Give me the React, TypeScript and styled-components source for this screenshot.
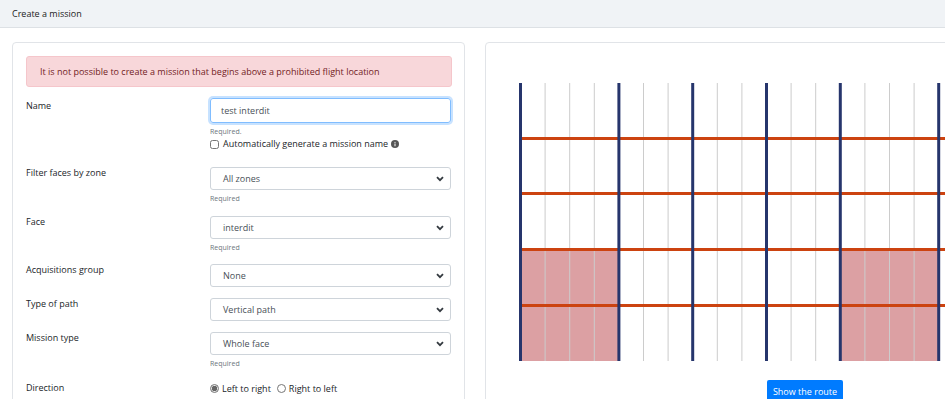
import styled, { createGlobalStyle } from "styled-components";

const GlobalStyle = createGlobalStyle`
	html, body {
		margin: 0;
		overflow: hidden;
		background: #ffffff;
	}
	body {
		font-family: "Open Sans", "Noto Sans", sans-serif;
		color: #212529;
	}
	* {
		box-sizing: border-box;
	}
`;

// grid columns: ~24.6px apart, thick where a face starts
const COL = 24.6;
const COLS = 23;
const THICK = [0, 4, 7, 10, 13, 17, 20, 23];
const ROW_Y = [0, 55.5, 110.5, 166.5, 222.5, 277];
const PINK = [
	[0, 4],
	[13, 17],
];

function FaceGrid() {
	const width = COL * COLS + 2;
	const height = ROW_Y[ROW_Y.length - 1] + 1;
	const cols = Array.from({ length: COLS + 1 }, (_, i) => i);

	return (
		<svg width={width} height={height} style={{ display: "block" }}>
			{PINK.map(([a, b]) => (
				<rect
					key={a}
					x={1 + a * COL}
					y={ROW_Y[3]}
					width={(b - a) * COL}
					height={height - ROW_Y[3]}
					fill="#dca0a3"
				/>
			))}
			{cols
				.filter((i) => !THICK.includes(i))
				.map((i) => (
					<line
						key={i}
						x1={1.5 + i * COL}
						x2={1.5 + i * COL}
						y1={0}
						y2={height}
						stroke="#cccccc"
						strokeWidth={1}
					/>
				))}
			{ROW_Y.slice(1, 5).map((y) => (
				<line
					key={y}
					x1={1}
					x2={width}
					y1={y}
					y2={y}
					stroke="#cc4310"
					strokeWidth={3}
				/>
			))}
			{THICK.map((i) => (
				<line
					key={i}
					x1={1.5 + i * COL}
					x2={1.5 + i * COL}
					y1={0}
					y2={height}
					stroke="#26356c"
					strokeWidth={3}
				/>
			))}
		</svg>
	);
}

function Chevron() {
	return (
		<svg width="8" height="6" viewBox="0 0 8 6">
			<path d="M1 1.2 L4 4.2 L7 1.2" fill="none" stroke="#343a40" strokeWidth="1.8" />
		</svg>
	);
}

function InfoIcon() {
	return (
		<svg width="8" height="8" viewBox="0 0 16 16">
			<circle cx="8" cy="8" r="8" fill="#555" />
			<rect x="7" y="7" width="2" height="5.5" fill="#fff" />
			<circle cx="8" cy="4.6" r="1.2" fill="#fff" />
		</svg>
	);
}

function SelectField({ value }: { value: string }) {
	return (
		<Select>
			<span>{value}</span>
			<Chevron />
		</Select>
	);
}

export default function App() {
	return (
		<>
			<GlobalStyle />
			<TopBar>Create a mission</TopBar>
			<Main>
				<LeftCard>
					<Alert>
						It is not possible to create a mission that begins above a prohibited flight
						location
					</Alert>

					<FieldRow $gap={17}>
						<Label $pad={2}>Name</Label>
						<div>
							<TextInput>test interdit</TextInput>
							<Help>Required.</Help>
							<CheckLine>
								<Check type="checkbox" />
								Automatically generate a mission name
								<InfoIcon />
							</CheckLine>
						</div>
					</FieldRow>

					<FieldRow>
						<Label>Filter faces by zone</Label>
						<div>
							<SelectField value="All zones" />
							<Help>Required</Help>
						</div>
					</FieldRow>

					<FieldRow $gap={10}>
						<Label>Face</Label>
						<div>
							<SelectField value="interdit" />
							<Help>Required</Help>
						</div>
					</FieldRow>

					<FieldRow>
						<Label>Acquisitions group</Label>
						<SelectField value="None" />
					</FieldRow>

					<FieldRow>
						<Label>Type of path</Label>
						<SelectField value="Vertical path" />
					</FieldRow>

					<FieldRow>
						<Label>Mission type</Label>
						<div>
							<SelectField value="Whole face" />
							<Help>Required</Help>
						</div>
					</FieldRow>

					<FieldRow>
						<Label $pad={1}>Direction</Label>
						<Radios>
							<RadioOption>
								<Radio $checked />
								Left to right
							</RadioOption>
							<RadioOption>
								<Radio />
								Right to left
							</RadioOption>
						</Radios>
					</FieldRow>
				</LeftCard>

				<RightCard>
					<FaceGrid />
					<ButtonRow>
						<RouteButton>Show the route</RouteButton>
					</ButtonRow>
				</RightCard>
			</Main>
		</>
	);
}

const TopBar = styled.div`
	height: 28px;
	display: flex;
	align-items: center;
	padding: 0 12px;
	background: #f0f3f6;
	border-bottom: 1px solid #dde1e5;
	font-size: 9px;
	color: #222;
`;

const Main = styled.div`
	display: flex;
	gap: 20px;
	padding: 14px 0 0 12px;
`;

const LeftCard = styled.div`
	flex-shrink: 0;
	width: 453px;
	height: 400px;
	border: 1px solid #e1e4e8;
	border-radius: 4px;
	padding: 13px 12px 0 13px;
`;

const RightCard = styled.div`
	flex-shrink: 0;
	width: 640px;
	height: 400px;
	border: 1px solid #e1e4e8;
	border-radius: 4px;
	padding: 40px 33px 0;
`;

const Alert = styled.div`
	height: 31px;
	display: flex;
	align-items: center;
	padding: 0 13px;
	margin-bottom: 11px;
	background: #f8d7da;
	border: 1px solid #f5c6cb;
	border-radius: 3px;
	color: #721c24;
	font-size: 9px;
`;

const FieldRow = styled.div<{ $gap?: number }>`
	display: grid;
	grid-template-columns: 184px 241px;
	margin-bottom: ${(p) => p.$gap ?? 11}px;
`;

const Label = styled.div<{ $pad?: number }>`
	font-size: 9px;
	line-height: 12px;
	padding-top: ${(p) => p.$pad ?? 0}px;
	color: #212529;
`;

const TextInput = styled.div`
	height: 25px;
	display: flex;
	align-items: center;
	padding: 0 10px;
	border: 1px solid #80bdff;
	border-radius: 3px;
	box-shadow: 0 0 0 2px rgba(0, 123, 255, 0.22);
	font-size: 9px;
	color: #495057;
`;

const Select = styled.div`
	height: 23px;
	display: flex;
	align-items: center;
	justify-content: space-between;
	padding: 0 6px 0 12px;
	border: 1px solid #ced4da;
	border-radius: 3px;
	font-size: 9px;
	color: #495057;
`;

const Help = styled.div`
	margin-top: 3px;
	font-size: 7px;
	line-height: 12px;
	color: #6c757d;
`;

const CheckLine = styled.label`
	display: flex;
	align-items: center;
	gap: 3px;
	font-size: 9px;
	line-height: 12px;
	color: #212529;
`;

const Check = styled.input`
	width: 9px;
	height: 9px;
	margin: 0 1px 0 0;
`;

const Radios = styled.div`
	display: flex;
	align-items: center;
	gap: 6px;
	height: 14px;
`;

const RadioOption = styled.label`
	display: flex;
	align-items: center;
	gap: 3px;
	font-size: 9px;
	color: #212529;
`;

const Radio = styled.span<{ $checked?: boolean }>`
	width: 9px;
	height: 9px;
	border-radius: 50%;
	border: 1px solid #767676;
	background: ${(p) => (p.$checked ? "radial-gradient(circle, #666 0 2.5px, #e8e8e8 3px)" : "#fff")};
`;

const ButtonRow = styled.div`
	display: flex;
	justify-content: center;
	margin-top: 19px;
`;

const RouteButton = styled.button`
	height: 22px;
	padding: 0 6px;
	border: none;
	border-radius: 2px;
	background: #007bff;
	color: #fff;
	font-family: inherit;
	font-size: 9px;
`;
